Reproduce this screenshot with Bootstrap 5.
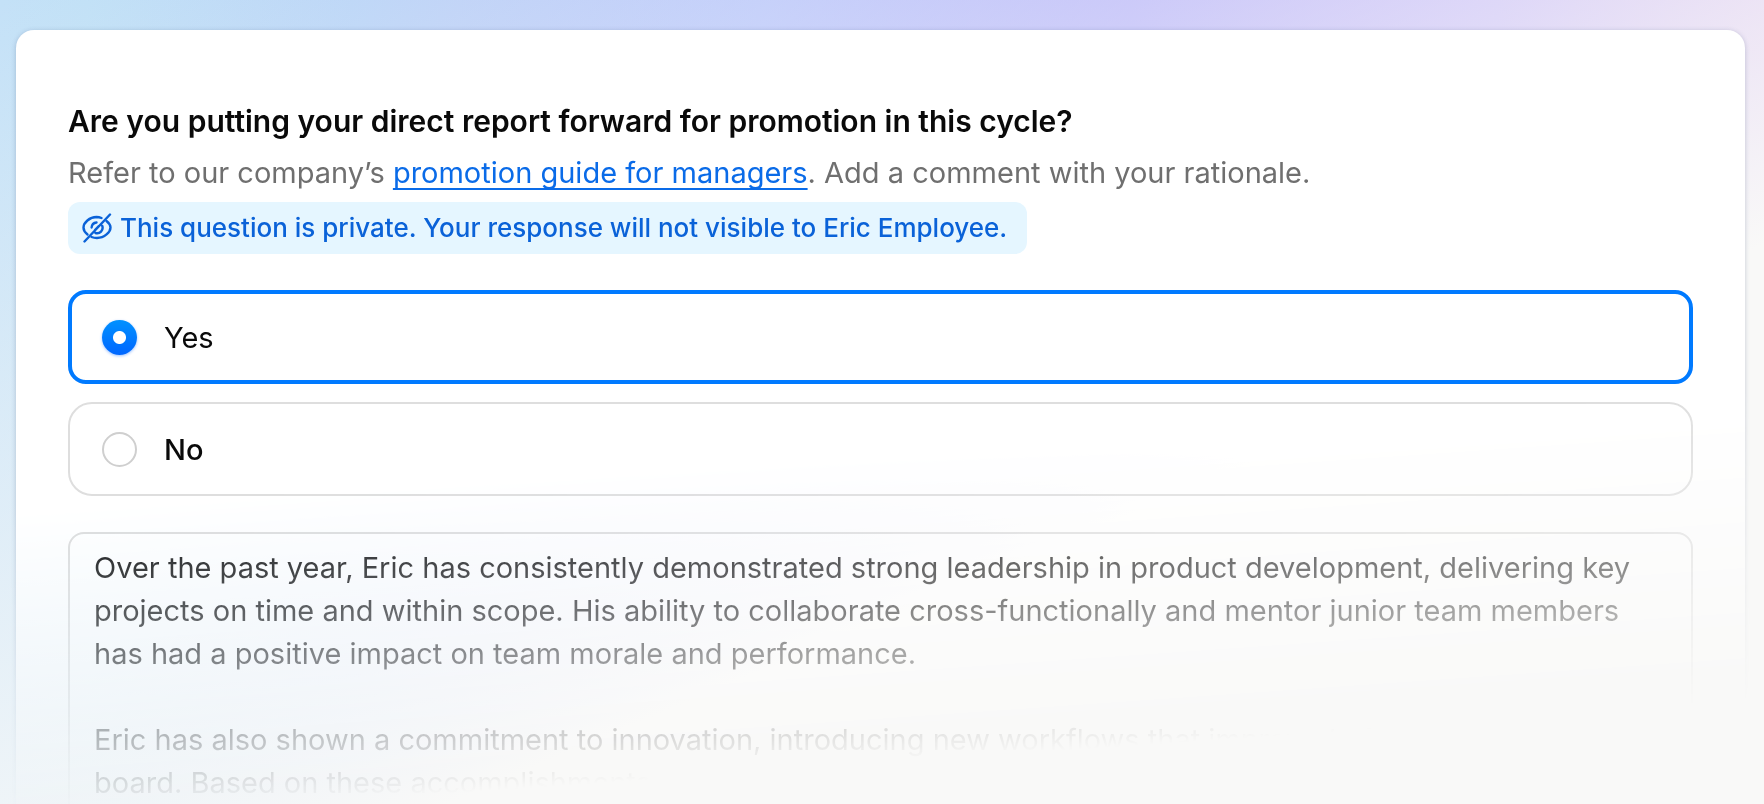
<!DOCTYPE html>
<html lang="en">
<head>
<meta charset="utf-8">
<meta name="viewport" content="width=device-width, initial-scale=1">
<title>Promotion review</title>
<link href="https://cdn.jsdelivr.net/npm/bootstrap@5.3.0/dist/css/bootstrap.min.css" rel="stylesheet">
<style>
  body {
    font-family: Inter, "Liberation Sans", sans-serif;
    font-size: 29px;
    line-height: 43px;
    color: #0a0a0a;
    background:
      linear-gradient(157deg, rgba(249,249,248,0) 0%, rgba(249,249,248,.45) 29%, rgba(249,249,248,.8) 52%, #f9f9f8 64%),
      linear-gradient(90deg, #c4e1f7 0%, #c0e0f6 5%, #b5d2f7 20%, #b5ccf7 26%, #aebefb 43%, #a29ffa 64%, #af9ef8 85%, #caa9ed 100%);
  }
  .stage { padding: 30px 19px 0 16px; }
  /* the form dissolves into the page towards the lower right */
  .fade-out {
    -webkit-mask-image: linear-gradient(176deg, #000 55%, transparent 89%);
    mask-image: linear-gradient(176deg, #000 55%, transparent 89%);
  }
  .review-card {
    border-radius: 18px;
    box-shadow: 0 1px 5px rgba(40,60,110,.25);
    padding: 66px 52px 0;
  }
  .question { font-size: 30px; line-height: 50px; font-weight: 600; }
  .hint { line-height: 54px; color: #6f6f6f; margin-bottom: 2px; }
  .hint a { color: #0a6be8; text-decoration: underline; text-decoration-thickness: 2px; text-underline-offset: 5px; text-decoration-skip-ink: none; }
  .private-note {
    background: #e5f6ff; color: #0a62d8; font-size: 26px; line-height: 36px; font-weight: 500;
    border-radius: 12px; padding: 8px 20px 8px 14px; margin-bottom: 36px;
  }
  .choice { height: 94px; border: 2px solid #dedede; border-radius: 24px; padding: 0 32px; margin-bottom: 18px; gap: 27px; font-weight: 500; }
  .choice:has(input:checked) { border: 4px solid #007aff; border-radius: 18px; padding: 0 30px; font-weight: 400; }
  .choice .form-check-input { width: 35px; height: 35px; margin: 0; border: 2px solid #cfcfcf; }
  .choice .form-check-input:checked {
    border: 0;
    background: radial-gradient(circle, #fff 6px, transparent 7px), linear-gradient(#0091ff, #0066ff);
    box-shadow: 0 1px 3px rgba(0,100,255,.4);
  }
  .comment, .comment:focus {
    height: 400px; border: 2px solid #dcdcdc; border-radius: 16px; padding: 12px 24px; margin-top: 36px;
    resize: none; overflow: hidden; font-size: inherit; line-height: inherit; color: #0a0a0a; background: transparent;
  }
</style>
</head>
<body class="vh-100 overflow-hidden">
<div class="fade-out vh-100 overflow-hidden">
  <main class="stage">
    <form class="review-card bg-white">
      <h1 class="question mb-0">Are you putting your direct report forward for promotion in this cycle?</h1>
      <p class="hint">Refer to our company’s <a href="#">promotion guide for managers</a>. Add a comment with your rationale.</p>
      <div class="private-note d-inline-flex align-items-center gap-2">
        <svg width="30" height="30" viewBox="0 0 30 30" fill="none" stroke="currentColor" stroke-width="2.4" stroke-linecap="round" aria-hidden="true">
          <path d="M19.500 5A15 15 0 0 0 14.500 4C7.500 4 1.500 9.800 1.500 14.500C1.500 17 3 19.500 5.500 21.500M24.500 8C27 10 28.500 12.500 28.500 14.500C28.500 19 22.500 25 15 25C13 25 11 24.600 9.500 24"/>
          <path d="M14.500 9.500A5.500 5.500 0 0 0 9.600 14.500M20.300 13A5.500 5.500 0 0 1 13.500 20M16.800 13L13 17M2.500 28.500L28 1.500"/>
        </svg>
        <span>This question is private. Your response will not visible to Eric Employee.</span>
      </div>
      <label class="choice d-flex align-items-center"><input class="form-check-input" type="radio" name="promote" checked>Yes</label>
      <label class="choice d-flex align-items-center mb-0"><input class="form-check-input" type="radio" name="promote">No</label>
      <textarea class="comment form-control" aria-label="Comment">Over the past year, Eric has consistently demonstrated strong leadership in product development, delivering key projects on time and within scope. His ability to collaborate cross-functionally and mentor junior team members has had a positive impact on team morale and performance.

Eric has also shown a commitment to innovation, introducing new workflows that improved efficiency across the board. Based on these accomplishments</textarea>
    </form>
  </main>
</div>
<script src="https://cdn.jsdelivr.net/npm/bootstrap@5.3.0/dist/js/bootstrap.bundle.min.js"></script>
</body>
</html>
